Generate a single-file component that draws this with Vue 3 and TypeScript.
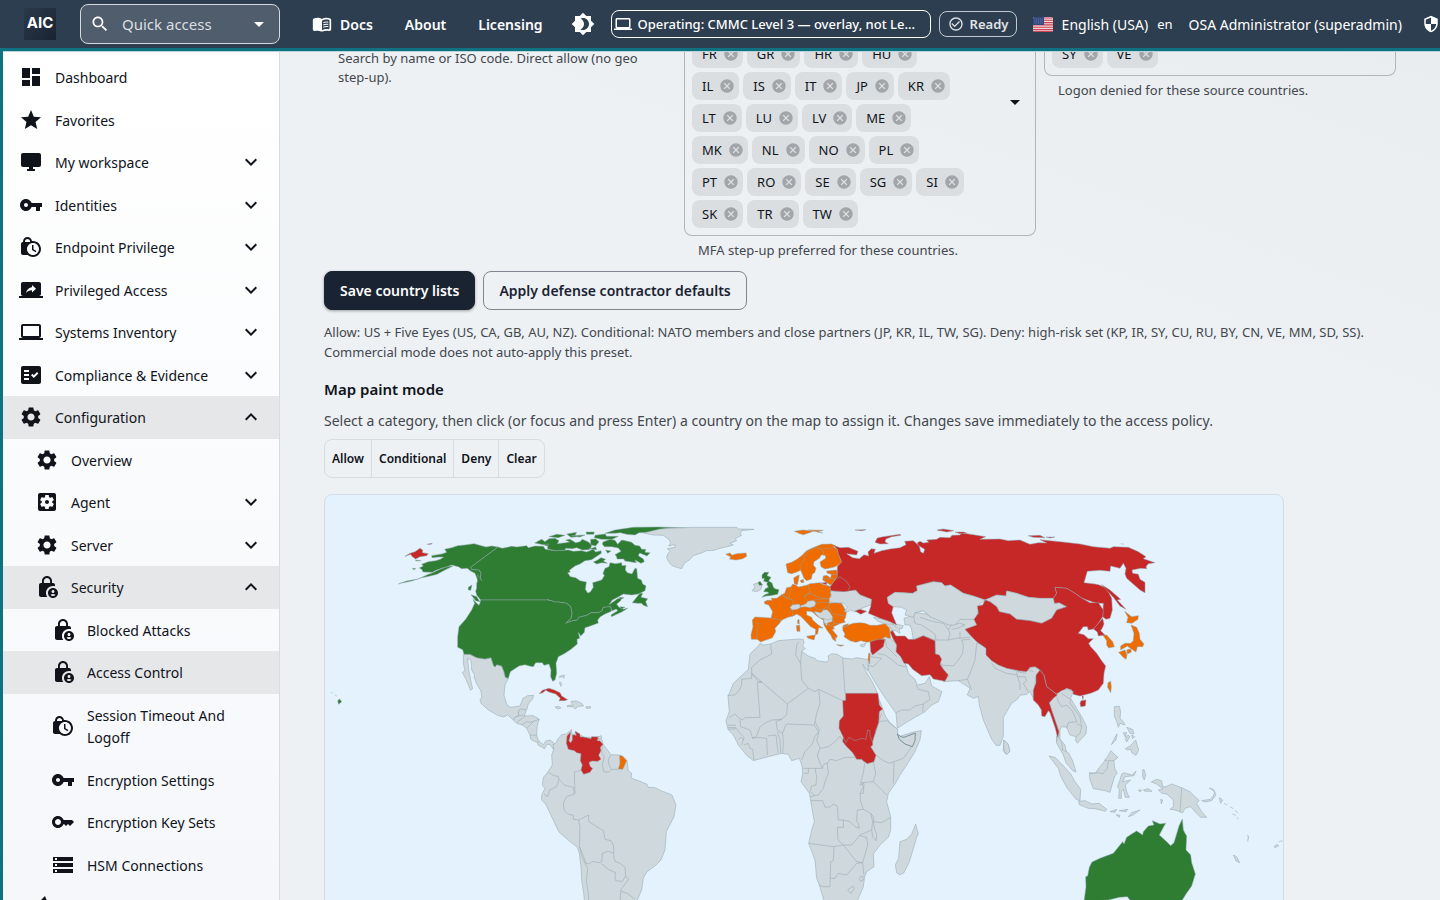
<script setup lang="ts">
import { ref } from 'vue'

interface NavItem {
  label: string
  icon: string
  level: number
  expand?: 'more' | 'less'
  active?: boolean
}

type Status = 'none' | 'allow' | 'cond' | 'deny' | 'line' | 'claim'

interface Region {
  transform: string
  shapes: [Status, string][]
}

const icons: Record<string, string> = {
  dashboard: 'M3 13h8V3H3v10zm0 8h8v-6H3v6zm10 0h8V11h-8v10zm0-18v6h8V3h-8z',
  star: 'M12 17.27 18.18 21l-1.64-7.03L22 9.24l-7.19-.61L12 2 9.19 8.63 2 9.24l5.46 4.73L5.82 21z',
  monitor: 'M20 3H4c-1.1 0-2 .9-2 2v10c0 1.1.9 2 2 2h6v2H8v2h8v-2h-2v-2h6c1.1 0 2-.9 2-2V5c0-1.1-.9-2-2-2z',
  vpnKey: 'M12.65 10C11.83 7.67 9.61 6 7 6c-3.31 0-6 2.69-6 6s2.69 6 6 6c2.61 0 4.83-1.67 5.65-4H17v4h4v-4h2v-4H12.65zM7 14c-1.1 0-2-.9-2-2s.9-2 2-2 2 .9 2 2-.9 2-2 2z',
  lockClock: 'M14.5 14.2l2.9 1.7-.8 1.3L13 15v-5h1.5v4.2zM22 14c0 4.41-3.59 8-8 8-2.02 0-3.86-.76-5.27-2H4c-1.15 0-2-.85-2-2V9c0-1.12.89-1.96 2-2v-.5C4 4.01 6.01 2 8.5 2c2.34 0 4.24 1.79 4.46 4.08.34-.05.69-.08 1.04-.08 4.41 0 8 3.59 8 8zM6 7h5v-.74C10.88 4.99 9.8 4 8.5 4 7.12 4 6 5.12 6 6.5V7zm14 7c0-3.31-2.69-6-6-6s-6 2.69-6 6 2.69 6 6 6 6-2.69 6-6z',
  screenShare: 'M20 18c1.1 0 1.99-.9 1.99-2L22 6c0-1.11-.9-2-2-2H4c-1.11 0-2 .89-2 2v10c0 1.1.89 2 2 2H0v2h24v-2h-4zm-7-3.53v-2.19c-2.78 0-4.61.85-6 2.72.56-2.67 2.11-5.33 6-5.87V7l4 3.73-4 3.74z',
  laptop: 'M20 18c1.1 0 1.99-.9 1.99-2L22 6c0-1.1-.9-2-2-2H4c-1.1 0-2 .9-2 2v10c0 1.1.9 2 2 2H0v2h24v-2h-4zM4 6h16v10H4V6z',
  factCheck: 'M20 3H4c-1.1 0-2 .9-2 2v14c0 1.1.9 2 2 2h16c1.1 0 2-.9 2-2V5c0-1.1-.9-2-2-2zM10 17H5v-2h5v2zm0-4H5v-2h5v2zm0-4H5V7h5v2zm4.82 6L12 12.16l1.41-1.41 1.41 1.42L17.99 9l1.42 1.42L14.82 15z',
  settings: 'M19.14 12.94c.04-.3.06-.61.06-.94 0-.32-.02-.64-.07-.94l2.03-1.58c.18-.14.23-.41.12-.61l-1.92-3.32c-.12-.22-.37-.29-.59-.22l-2.39.96c-.5-.38-1.03-.7-1.62-.94l-.36-2.54c-.04-.24-.24-.41-.48-.41h-3.84c-.24 0-.43.17-.47.41l-.36 2.54c-.59.24-1.13.57-1.62.94l-2.39-.96c-.22-.08-.47 0-.59.22L2.74 8.87c-.12.21-.08.47.12.61l2.03 1.58c-.05.3-.09.63-.09.94s.02.64.07.94l-2.03 1.58c-.18.14-.23.41-.12.61l1.92 3.32c.12.22.37.29.59.22l2.39-.96c.5.38 1.03.7 1.62.94l.36 2.54c.05.24.24.41.48.41h3.84c.24 0 .44-.17.47-.41l.36-2.54c.59-.24 1.13-.56 1.62-.94l2.39.96c.22.08.47 0 .59-.22l1.92-3.32c.12-.22.07-.47-.12-.61l-2.01-1.58zM12 15.6c-1.98 0-3.6-1.62-3.6-3.6s1.62-3.6 3.6-3.6 3.6 1.62 3.6 3.6-1.62 3.6-3.6 3.6z',
  settingsApp: 'M12 10c-1.1 0-2 .9-2 2s.9 2 2 2 2-.9 2-2-.9-2-2-2zm7-7H5c-1.11 0-2 .9-2 2v14c0 1.1.89 2 2 2h14c1.11 0 2-.9 2-2V5c0-1.1-.89-2-2-2zm-1.75 9c0 .23-.02.46-.05.68l1.48 1.16c.13.11.17.3.08.45l-1.4 2.42c-.09.15-.27.21-.43.15l-1.74-.7c-.36.28-.76.51-1.18.69l-.26 1.85c-.03.17-.18.3-.35.3h-2.8c-.17 0-.32-.13-.35-.29l-.26-1.85c-.43-.18-.82-.41-1.18-.69l-1.74.7c-.16.06-.34 0-.43-.15l-1.4-2.42c-.09-.15-.05-.34.08-.45l1.48-1.16c-.03-.23-.05-.46-.05-.69 0-.23.02-.46.05-.68l-1.48-1.16c-.13-.11-.17-.3-.08-.45l1.4-2.42c.09-.15.27-.21.43-.15l1.74.7c.36-.28.76-.51 1.18-.69l.26-1.85c.03-.17.18-.3.35-.3h2.8c.17 0 .32.13.35.29l.26 1.85c.43.18.82.41 1.18.69l1.74-.7c.16-.06.34 0 .43.15l1.4 2.42c.09.15.05.34-.08.45l-1.48 1.16c.03.23.05.46.05.69z',
  lockPerson: 'M18 11c.7 0 1.37.1 2 .29V10c0-1.1-.9-2-2-2h-1V6c0-2.76-2.24-5-5-5S7 3.24 7 6v2H6c-1.1 0-2 .9-2 2v10c0 1.1.9 2 2 2h6.26C11.47 20.87 11 19.49 11 18c0-3.87 3.13-7 7-7zM8.9 6c0-1.71 1.39-3.1 3.1-3.1s3.1 1.39 3.1 3.1v2H8.9V6zM18 13c-2.76 0-5 2.24-5 5s2.24 5 5 5 5-2.24 5-5-2.24-5-5-5zm0 2c.83 0 1.5.67 1.5 1.5S18.83 18 18 18s-1.5-.67-1.5-1.5.67-1.5 1.5-1.5zm0 6c-1.03 0-1.94-.52-2.48-1.32.73-.42 1.57-.68 2.48-.68s1.75.26 2.48.68C19.94 20.48 19.03 21 18 21z',
  key: 'M21 10h-8.35C11.83 7.67 9.61 6 7 6c-3.31 0-6 2.69-6 6s2.69 6 6 6c2.61 0 4.83-1.67 5.65-4H13l2 2 2-2 2 2 4-4.04L21 10zM7 15c-1.65 0-3-1.35-3-3s1.35-3 3-3 3 1.35 3 3-1.35 3-3 3z',
  storage: 'M2 20h20v-4H2v4zm2-3h2v2H4v-2zM2 4v4h20V4H2zm4 3H4V5h2v2zm-4 7h20v-4H2v4zm2-3h2v2H4v-2z',
  more: 'M16.59 8.59 12 13.17 7.41 8.59 6 10l6 6 6-6z',
  less: 'M12 8l-6 6 1.41 1.41L12 10.83l4.59 4.58L18 14z',
  search: 'M15.5 14h-.79l-.28-.27C15.41 12.59 16 11.11 16 9.5 16 5.91 13.09 3 9.5 3S3 5.91 3 9.5 5.91 16 9.5 16c1.61 0 3.09-.59 4.23-1.57l.27.28v.79l5 4.99L20.49 19l-4.99-5zm-6 0C7.01 14 5 11.99 5 9.5S7.01 5 9.5 5 14 7.01 14 9.5 11.99 14 9.5 14z',
  caret: 'M7 10l5 5 5-5z',
  book: 'M17.5 4.5c-1.95 0-4.05.4-5.5 1.5-1.45-1.1-3.55-1.5-5.5-1.5-1.45 0-2.99.22-4.28.79C1.49 5.62 1 6.33 1 7.14v11.28c0 1.3 1.22 2.26 2.48 1.94.98-.25 2.02-.36 3.02-.36 1.56 0 3.22.26 4.56.92.6.3 1.28.3 1.87 0 1.34-.67 3-.92 4.56-.92 1 0 2.04.11 3.02.36 1.26.33 2.48-.63 2.48-1.94V7.14c0-.81-.49-1.52-1.22-1.85-1.28-.57-2.82-.79-4.27-.79zM21 17.23c0 .63-.58 1.09-1.2.98-.75-.14-1.53-.2-2.3-.2-1.7 0-4.15.65-5.5 1.5V8c1.35-.85 3.8-1.5 5.5-1.5.92 0 1.83.09 2.7.28.46.1.8.51.8.98v9.47zM13.6 9.7c1.7-.7 3.9-.95 5.9-.6v1.4c-2-.35-4.2-.1-5.9.6zM13.6 12.4c1.7-.7 3.9-.95 5.9-.6v1.4c-2-.35-4.2-.1-5.9.6zM13.6 15.1c1.7-.7 3.9-.95 5.9-.6v1.4c-2-.35-4.2-.1-5.9.6z',
  brightness: 'M20 8.69V4h-4.69L12 .69 8.69 4H4v4.69L.69 12 4 15.31V20h4.69L12 23.31 15.31 20H20v-4.69L23.31 12 20 8.69zM12 18c-.89 0-1.74-.2-2.5-.55C11.56 16.5 13 14.42 13 12s-1.44-4.5-3.5-5.45C10.26 6.2 11.11 6 12 6c3.31 0 6 2.69 6 6s-2.69 6-6 6z',
  check: 'M16.59 7.58 10 14.17l-3.59-3.58L5 12l5 5 8-8zM12 2C6.48 2 2 6.48 2 12s4.48 10 10 10 10-4.48 10-10S17.52 2 12 2zm0 18c-4.42 0-8-3.58-8-8s3.58-8 8-8 8 3.58 8 8-3.58 8-8 8z',
  shield: 'M12 1 3 5v6c0 5.55 3.84 10.74 9 12 5.16-1.26 9-6.45 9-12V5l-9-4zm0 10.99h7c-.53 4.12-3.28 7.79-7 8.94V12H5V6.3l7-3.11v8.8z',
  cancel: 'M12 2C6.47 2 2 6.47 2 12s4.47 10 10 10 10-4.47 10-10S17.53 2 12 2zm5 13.59L15.59 17 12 13.41 8.41 17 7 15.59 10.59 12 7 8.41 8.41 7 12 10.59 15.59 7 17 8.41 13.41 12 17 15.59z',
  pen: 'M10 1 7 4l-6 8h6l5-6z',
}

const nav: NavItem[] = [
  { label: 'Dashboard', icon: 'dashboard', level: 0 },
  { label: 'Favorites', icon: 'star', level: 0 },
  { label: 'My workspace', icon: 'monitor', level: 0, expand: 'more' },
  { label: 'Identities', icon: 'vpnKey', level: 0, expand: 'more' },
  { label: 'Endpoint Privilege', icon: 'lockClock', level: 0, expand: 'more' },
  { label: 'Privileged Access', icon: 'screenShare', level: 0, expand: 'more' },
  { label: 'Systems Inventory', icon: 'laptop', level: 0, expand: 'more' },
  { label: 'Compliance & Evidence', icon: 'factCheck', level: 0, expand: 'more' },
  { label: 'Configuration', icon: 'settings', level: 0, expand: 'less', active: true },
  { label: 'Overview', icon: 'settings', level: 1 },
  { label: 'Agent', icon: 'settingsApp', level: 1, expand: 'more' },
  { label: 'Server', icon: 'settings', level: 1, expand: 'more' },
  { label: 'Security', icon: 'lockPerson', level: 1, expand: 'less', active: true },
  { label: 'Blocked Attacks', icon: 'lockPerson', level: 2 },
  { label: 'Access Control', icon: 'lockPerson', level: 2, active: true },
  { label: 'Session Timeout And Logoff', icon: 'lockClock', level: 2 },
  { label: 'Encryption Settings', icon: 'vpnKey', level: 2 },
  { label: 'Encryption Key Sets', icon: 'key', level: 2 },
  { label: 'HSM Connections', icon: 'storage', level: 2 },
]

const conditionalRows = [
  ['FR', 'GR', 'HR', 'HU'],
  ['IL', 'IS', 'IT', 'JP', 'KR'],
  ['LT', 'LU', 'LV', 'ME'],
  ['MK', 'NL', 'NO', 'PL'],
  ['PT', 'RO', 'SE', 'SG', 'SI'],
  ['SK', 'TR', 'TW'],
]
const deniedRows = [['SY', 'VE']]

const modes = ['Allow', 'Conditional', 'Deny', 'Clear']
const mode = ref('')

const regions: Region[] = [
  {
    // Americas
    transform: 'translate(325 510) scale(.33333)',
    shapes: [
      ['none', 'M415 433L435 433 455 443 480 447 498 443 508 470 515 464 530 468 537 485 541 502 550 505 540 525 537 555 545 583 556 592 585 588 594 565 608 557 626 556 622 568 610 582 605 600 595 598 580 605 582 618 572 620 565 630 548 615 535 621 518 616 490 600 468 580 465 570 470 562 468 543 455 522 447 500 449 495 440 480 438 450 428 445 430 470 434 495 439 520 443 536 437 541 430 525 423 508 412 487 420 483 415 460Z'],
      ['none', 'M565 630L572 620 582 618 580 605 585 597 600 598 603 604 598 618 625 617 643 628 637 645 635 675 640 692 655 704 662 693 675 690 688 700 685 718 675 704 668 703 662 710 658 717 652 712 640 706 637 697 625 693 617 687 615 675 605 655 592 645 575 640Z'],
      ['line', 'M575 638L588 628 600 618M590 645L605 635 615 637 643 628M605 655L625 635M615 675L635 676M637 697L642 692M583 618L595 615'],
      ['none', 'M740 658L724 672 710 674 700 685 692 700 684 704 686 718 680 735 682 765 668 787 655 802 652 826 660 835 650 855 650 870 663 884 680 920 702 966 733 993 757 1012 763 1030 768 1070 770 1110 776 1150 780 1190 928 1190 950 1140 955 1105 965 1086 990 1068 1008 1050 1020 1020 1024 965 1047 920 1053 885 1041 855 1008 842 990 833 970 832 965 822 940 812 918 804 920 790 910 782 906 752 895 740 882 735 858 734 835 704 831 690 820 680 800 682 780 682 765 675 752 664 748 676 740 670Z'],
      ['line', 'M767 781L748 786 750 850M670 787L685 796 700 800 702 808 695 830 674 840 668 860 657 852M702 808L718 825 745 832 748 852 725 860 715 880 718 902 728 912 745 916 745 928 762 930M762 930L790 915 792 935 812 948 835 962 840 988 858 992 865 1005 867 1030M760 930L765 950 763 1010 772 1030 783 1060 792 1062 803 1054 822 1058 830 1055 832 1030 848 1024 864 1028 870 1054 885 1060 900 1072 902 1098 892 1114 872 1112 870 1098 872 1088 850 1078 828 1060M765 1012L770 1040 788 1075 784 1115 790 1150 792 1190M902 1098L911 1108 888 1138 884 1190M888 1143L910 1152 930 1168M832 705L830 726 838 740 832 765 836 785 850 787 860 778 880 778M857 736L850 750 852 765 860 778'],
      ['deny', 'M737 665L726 678 724 700 730 718 748 722 755 728 768 731 766 752 772 765 768 780 776 793 795 787 803 775 796 770 792 757 802 753 818 754 828 748 821 736 828 722 826 712 834 703 824 692 816 692 822 681 800 680 798 686 780 682 765 680 765 672 750 664 754 676 742 674 742 690 737 698 732 692 735 680Z'],
      ['cond', 'M884 737L892 738 905 752 893 778 880 777 885 762Z'],
      ['deny', 'M643 551L652 541 672 535 688 540 705 548 710 558 728 569 718 572 702 572 706 565 692 552 672 546 662 541 653 548Z'],
      ['none', 'M738 574L755 573 770 580 776 588 760 589 750 597 744 590 726 590 728 586 745 585 740 580ZM690 591L700 589 708 594 698 597ZM783 590L797 590 796 595 784 595ZM704 499L718 495 717 505 712 500 703 502ZM705 515L710 520 708 529 704 521ZM818 681L829 677 830 685 820 687Z'],
      ['allow', 'M519 111L500 108 483 111 447 101 420 105 398 107 380 113 359 118 365 127 350 132 320 137 321 143 340 141 356 141 346 148 332 152 310 155 290 163 295 168 283 174 290 178 294 186 322 187 333 181 352 174 372 169 384 168 360 180 336 193 312 199 290 203 260 213 230 219 220 222 245 213 280 207 310 193 320 190 345 178 380 165 400 170 410 176 427 175 437 183 450 190 456 205 462 222 470 212 466 205 468 190 463 180 440 178 437 172Z'],
      ['allow', 'M519 111L532 115 560 109 575 111 605 107 610 113 630 108 655 109 661 118 690 122 730 120 745 124 770 122 785 126 805 118 812 126 828 122 829 130 800 149 780 152 765 162 750 168 733 181 736 186 728 188 736 200 752 203 765 212 784 216 781 238 788 249 796 246 805 232 803 218 830 210 838 197 834 190 840 175 852 170 855 158 872 161 890 158 891 167 903 166 901 180 907 188 921 192 930 175 935 176 938 205 949 210 953 222 963 228 960 242 940 252 920 255 895 252 878 262 862 270 852 284 878 266 890 263 887 272 875 282 882 292 895 298 908 295 890 306 870 315 860 320 858 315 878 302 874 297 860 303 857 290 835 292 831 303 820 308 798 308 785 316 762 322 757 330 740 333 722 340 738 325 741 310 737 290 725 280 700 276 688 276 678 271 671 272 669 267 665 270 467 270 455 255 452 243 455 235 455 220 458 212 456 200 458 194 470 212 466 205 468 190 463 180 440 178 437 172Z'],
      ['allow', 'M467 270L665 270 669 267 671 272 678 271 688 276 700 276 725 280 737 290 741 310 738 325 722 340 740 333 757 330 762 322 785 316 798 308 820 308 831 303 835 292 857 290 859 304 840 312 826 320 818 330 820 339 790 350 780 353 778 367 767 378 760 367 764 385 756 388 757 402 738 418 720 430 700 440 693 460 695 490 690 510 683 514 677 500 678 480 672 462 657 466 652 458 632 458 625 470 613 468 600 464 582 468 556 485 550 505 541 502 537 485 530 468 515 464 511 470 506 468 498 443 480 447 455 443 435 433 417 433 413 419 398 412 398 380 402 350 422 328 440 300 449 280 444 268 455 280 462 286 465 278Z'],
      ['allow', 'M438 254L455 260 465 275 452 272ZM430 232L441 225 437 241 430 240ZM922 278L935 262 945 250 953 250 948 262 968 266 962 275 968 290 955 286 950 280 938 280ZM882 262L897 263 890 267ZM884 290L900 292 890 297Z'],
      ['allow', 'M629 99L650 88 660 95 672 86 690 85 702 92 697 101 722 98 734 96 722 90 735 88 752 98 765 95 772 88 790 96 800 105 797 115 790 119 772 120 755 113 742 116 722 115 720 121 690 122 668 117 668 107 648 103ZM672 80L695 73 720 76 700 83ZM725 72L755 67 750 76 760 80 738 82ZM783 66L808 66 806 73 785 73ZM797 88L812 87 822 95 812 108 797 104ZM810 76L840 72 845 79 880 79 862 88 830 88 808 83ZM840 70L870 60 890 57 925 52 1000 51 1085 54 1035 55 1010 58 978 67 942 68 930 75 905 73 886 68 870 70ZM655 103L672 102 665 108ZM740 77L780 75 765 81Z'],
      ['allow', 'M834 96L855 88 870 91 878 103 890 90 908 94 920 97 930 106 944 108 950 118 962 118 960 127 975 128 966 138 944 129 940 137 955 147 958 155 948 160 930 150 934 158 920 156 900 153 896 147 876 147 875 140 870 134 888 124 880 114 860 110 838 110 832 102ZM805 156L818 150 828 143 842 148 835 153 847 160 830 158 815 162ZM792 117L812 111 815 119ZM842 120L858 123 848 130Z'],
      ['allow', 'M38 572L44 567 50 575 41 583ZM30 555L36 559M18 547L23 549M262 175L273 176 265 179M270 150L288 152 275 153'],
      ['deny', 'M240 139L255 130 270 125 285 115 293 120 292 128 310 131 305 137 285 140 272 147 262 140 257 133ZM306 103L322 100 318 103Z'],
    ],
  },
  {
    // Europe and the North Atlantic
    transform: 'translate(640 510) scale(.33333)',
    shapes: [
      ['none', 'M10 69L60 57 90 55 160 52 290 52 296 57 342 58 305 62 300 72 305 76 285 86 290 92 270 100 280 105 262 110 240 115 222 121 200 122 182 130 160 137 148 150 133 160 125 176 110 172 95 166 86 155 80 142 84 130 90 124 82 116 105 112 105 104 86 108 92 98 86 88 70 76 40 75Z'],
      ['cond', 'M257 133L270 129 276 136 290 131 318 129 320 139 308 146 288 150 268 147 273 141ZM463 64L490 60 520 64 506 69 490 74 480 71ZM505 60L550 61 532 66 548 69Z'],
      ['none', 'M336 242L345 231 340 223 355 218 366 226 362 239 350 245Z'],
      ['allow', 'M354 218L360 214 368 225 358 226ZM366 195L373 187 386 187 381 197 393 202 386 213 396 219 400 231 405 236 417 239 413 253 390 257 378 258 366 262 374 254 386 250 384 246 371 245 376 236 385 232 380 222 383 217 371 214 373 204 366 206Z'],
      ['cond', 'M438 162L455 157 472 147 485 137 500 122 522 112 545 103 575 102 586 107 582 112 592 118 595 132 605 155 595 166 580 172 555 177 543 170 540 156 557 145 557 137 545 134 538 145 522 155 520 165 528 175 524 188 517 192 514 207 500 212 492 205 486 190 482 180 473 185 455 191 443 188ZM461 204L470 198 478 195 476 207 472 224 463 222ZM480 212L490 208 492 217 484 218Z'],
      ['line', 'M482 182L480 165 492 150 494 138 510 118 530 113 545 118 552 115 570 117 585 108M540 114L550 125 551 136'],
      ['cond', 'M560 183L590 180 592 193 594 205 586 222 570 224 548 210 550 198 560 196 572 204 574 193 562 190Z'],
      ['line', 'M573 193L592 194M550 207L575 205 590 210'],
      ['cond', 'M373 275L382 271 396 271 394 265 410 265 425 254 434 250 440 233 453 231 457 223 465 224 476 231 500 226 510 221 540 218 545 222 570 229 572 243 575 250 568 268 568 280 585 278 605 280 614 297 620 300 617 322 612 330 616 337 602 340 580 350 583 357 576 358 592 378 588 386 585 380 588 394 578 388 572 375 562 362 552 345 550 330 530 318 518 306 508 304 500 303 500 315 515 322 518 330 535 345 549 354 536 353 533 372 526 374 527 358 512 350 496 333 482 319 470 312 460 318 444 322 425 330 420 338 405 355 407 365 397 383 385 388 375 391 362 396 352 388 334 388 333 375 339 350 337 330 345 321 393 324 398 305 386 285 374 281Z'],
      ['none', 'M450 292L458 284 478 282 482 292 472 298 463 299 455 300ZM480 288L498 281 503 274 520 271 528 278 524 289 510 293 494 290 484 292Z'],
      ['none', 'M523 304L543 308 550 300 562 299 570 308 578 320 576 335 564 338 560 348 552 337 551 326 540 324 527 312Z'],
      ['line', 'M424 254L450 268 460 270 458 283 450 292 458 303 458 318M424 254L435 262 447 266 450 248 455 235M505 224L510 247 493 258 503 274M493 258L510 250 542 264 568 266M520 271L535 268 568 266M528 280L545 276 568 278M524 289L532 298 550 298 565 290 570 278M510 293L512 302M549 300L555 292M565 290L580 312 615 318M578 322L582 340 602 340M564 350L582 342M393 324L428 332M345 338L356 340 352 360 350 388M550 325L566 330 576 324M556 340L572 345'],
      ['cond', 'M500 379L526 375 522 390 503 384ZM469 347L479 345 480 364 471 364ZM473 330L477 328 478 341 473 341ZM590 404L612 406 602 409Z'],
      ['none', 'M570 246L600 243 612 245 632 240 647 240 660 254 694 266 694 284 660 297 645 306 632 300 625 305 612 305 622 292 612 280 600 278 570 277 568 266 575 258Z'],
      ['line', 'M602 280L613 290 614 305'],
      ['none', 'M700 322L745 330 763 345 772 343 790 347 786 357 778 354 780 370 768 362 748 363 740 345 712 333Z'],
      ['line', 'M735 342L760 343 770 355M748 348L760 362'],
      ['cond', 'M608 350L625 345 640 340 660 338 675 340 690 346 712 346 735 341 748 354 752 385 735 387 710 390 692 395 680 397 662 392 648 397 630 392 612 380 615 372 609 362ZM610 346L625 341 622 349 610 352Z'],
      ['none', 'M660 405L678 400 672 410 664 410Z'],
      ['deny', 'M705 97L712 84 730 80 780 73 783 76 755 80 738 87 735 95 745 101 720 102ZM645 60L678 59 665 62ZM892 61L904 59 900 63Z'],
    ],
  },
  {
    // Africa
    transform: 'translate(700 630) scale(.33333)',
    shapes: [
      ['none', 'M180 40L190 45 212 42 235 32 270 29 295 27 310 28 312 38 308 48 316 56 305 64 325 78 345 85 352 92 378 96 387 92 384 78 395 71 412 73 430 84 455 87 470 83 500 88 507 92 508 110 503 122 488 103 500 128 515 152 528 178 536 205 548 235 556 258 568 276 585 292 594 300 592 315 602 318 640 306 664 302 660 330 645 365 620 405 600 435 585 462 565 490 560 515 572 560 572 600 565 622 540 645 520 672 522 710 500 725 494 740 490 770 472 812 372 812 358 765 350 745 345 690 326 640 335 600 343 575 332 512 328 490 303 455 308 430 306 408 298 385 275 392 265 373 245 370 205 380 160 392 140 376 115 345 100 315 84 298 78 272 88 245 84 200 100 160 145 118 150 72 175 48Z'],
      ['line', 'M212 42L215 72 180 90 155 112 155 145 125 148 125 165 118 180 105 195 82 196M155 130L262 222 325 175 305 150 302 100 287 75 290 45 297 35M302 100L305 65M155 130L175 155 186 156 172 157 180 262 135 263 128 270 118 265 105 252 88 262M262 222L260 255 245 268 215 270 195 280 180 290 170 318 157 325M325 175L345 185 356 178 360 220 350 250 343 285 260 282 255 290 248 310 232 300 228 275 245 268M356 178L428 212M428 85L435 190M343 285L355 305 345 320 335 345 315 365 305 390M345 275L358 300 355 315 350 330 360 355 385 350 405 335 420 318 430 335M360 355L352 375 360 400 367 415 372 402 382 400 390 388 410 392 435 382 460 382 483 388M310 415L345 415 367 415M310 430L325 430 325 415M345 415L350 440 348 465 335 468 330 485 345 497M382 400L385 430 375 455 370 475 355 495 330 500M332 512L368 512 375 532 392 530 400 522 412 528 415 570 430 570 430 592 412 592 414 630 430 645 400 650 326 640M430 570L450 575 465 590 478 595 475 580 470 575 472 540 490 538 512 550 518 575 515 600 480 615 455 645 430 645M490 538L482 515 480 490 490 470 482 458 520 455 560 495M520 455L527 430 520 395M494 400L490 430 482 458M478 465L492 460 490 490 480 490M520 575L545 578 572 562M512 550L520 560 522 590 530 615 528 632 518 620 515 600M478 617L500 622 503 645 488 698 470 695 450 670 430 645M402 650L400 692 392 695 390 770 370 770 358 765M392 745L405 745 415 730 440 735 470 700 488 698 490 720 492 735M478 742L488 738 490 750 482 754 478 745M120 270L122 290 150 300 158 325M84 286L108 285M84 293L108 292M84 298L110 296 120 310 132 322 125 345M115 328L122 322 132 330M132 345L145 340 150 355 158 358 162 390M158 325L172 322 200 325 202 375M202 318L228 315 234 368M232 305L240 330 242 370M248 310L250 340 248 370M545 250L535 275 560 272 590 295M528 375L550 392 568 400 582 395 610 385 637 348M582 397L580 460M535 278L525 315'],
      ['none', 'M647 582L655 612 650 622 645 640 628 695 612 728 600 735 590 728 586 705 596 685 597 668 600 635 620 628 635 612Z'],
      ['line', 'M443 780L458 768 463 776 452 790Z'],
      ['deny', 'M437 190L534 190 538 225 548 237 538 245 536 278 528 300 518 335 518 346 512 350 528 376 522 395 502 401 490 393 485 388 470 388 458 368 440 350 428 335 430 322 417 295 418 272 430 258 428 212 437 211Z'],
      ['line', 'M430 322L438 338 447 322 465 332 485 325 498 328 503 300 510 302 510 320 518 335'],
      ['claim', 'M592 312L602 320 612 322 646 309 645 332 637 350 615 342 598 328Z'],
    ],
  },
  {
    // Asia
    transform: 'translate(880 510) scale(.33333)',
    shapes: [
      ['none', 'M-30 440L-20 412 15 380 35 388 50 402 52 425 65 440 75 460 80 470 85 490 105 508 112 525 135 520 148 500 155 528 186 545 175 575 155 585 135 605 105 622 75 640 52 655 48 610 20 570 -10 525 -35 482 -36 465Z'],
      ['line', 'M-28 440L5 445 -20 470 -36 466M-8 430L15 435 35 448 55 466 78 470M15 385L20 410 50 440M48 608L65 600 90 600 105 588 130 582 128 605M130 582L150 568 145 545 115 538 108 525'],
      ['none', 'M90 345L75 345 72 325 88 320 100 308 200 318 292 328 330 400 345 455 415 485 450 475 468 470 485 485 468 500 465 525 460 565 450 545 440 553 420 556 412 568 395 580 370 622 370 678 360 706 348 706 335 688 310 630 298 585 295 560 280 565 262 555 270 535 235 512 190 515 205 500 180 460 165 430 165 390 130 378 100 388 95 360Z'],
      ['line', 'M100 335L110 342 125 345 165 372 168 390M105 340L100 310 130 302 150 320 185 318 205 330 215 345 205 358 190 340 160 335 120 322M165 390L205 390 230 385 270 382M205 358L210 372 205 390M215 345L240 340 255 345 232 355 215 358M240 365L240 385M168 430L185 465 220 468 235 450 248 430 250 405 245 390 270 388M235 512L262 508 270 490 285 450 290 400 320 405M262 508L275 540M335 460L345 475 380 490 410 495M410 487L412 500 420 520 420 540M412 485L438 490M412 500L435 500 440 512 430 520 445 545M445 480L460 485'],
      ['none', 'M372 690L385 705 389 725 378 733 370 722Z'],
      ['deny', 'M-140 106L-120 113 -95 112 -66 124 -70 135 -100 131 -82 143 -62 146 -48 134 -34 138 -36 126 -26 116 -14 118 -18 130 5 122 30 117 60 113 78 104 74 94 100 92 118 108 122 125 130 130 134 118 114 106 112 98 120 94 130 99 146 97 140 90 170 88 180 82 210 83 216 76 240 75 245 69 280 74 317 80 300 88 360 87 385 92 420 90 450 103 475 98 500 99 480 89 540 95 600 102 640 110 690 115 700 110 745 112 775 125 798 140 790 146 825 158 805 161 798 170 800 176 782 175 756 180 758 190 775 193 780 208 795 217 795 248 780 240 740 205 735 192 738 175 730 160 720 175 692 168 690 184 660 181 622 184 612 218 645 222 658 225 680 235 695 265 697 300 690 325 678 328 668 320 670 280 650 280 620 270 605 264 585 250 560 235 525 232 530 250 520 265 480 265 445 262 410 250 380 243 378 258 350 255 315 270 280 258 250 250 212 225 195 228 185 218 160 215 110 228 112 242 98 250 45 247 22 262 25 280 40 290 35 308 50 345 30 335 0 325 -35 310 -28 290 -25 268 -60 254 -73 240 -108 245 -148 242 -150 230 -135 210 -128 200 -128 170 -115 155 -125 132 -128 118Z'],
      ['line', 'M-150 230L-135 210 -120 200 -100 215 -90 230 -95 240'],
      ['deny', 'M-75 303L-60 298 -40 304 -58 313ZM-178 219L-160 217 -160 224ZM172 60L190 57 222 62 200 66ZM225 66L250 66 262 70 240 71ZM445 77L480 76 495 83 460 82ZM498 81L525 81 510 84ZM722 101L732 103M665 224L690 240 722 268 712 270 738 298 720 288 700 262Z'],
      ['none', 'M22 262L45 247 98 250 112 242 110 228 160 215 185 218 195 228 212 225 250 250 280 258 315 270 295 287 308 300 292 308 290 328 240 328 225 345 205 345 185 335 150 320 130 302 105 308 100 322 75 315 80 300 65 292 40 290 25 280Z'],
      ['none', 'M315 270L350 255 378 258 380 243 410 250 445 262 480 265 520 265 524 280 538 278 560 290 530 300 515 325 485 340 450 332 410 328 390 312 358 305 350 290 330 275Z'],
      ['deny', 'M315 270L330 275 350 290 358 305 390 312 410 328 450 332 485 340 515 325 530 300 560 290 538 278 524 280 520 265 530 250 525 232 560 235 585 250 605 264 630 278 655 278 670 300 668 320 655 340 640 357 625 360 622 350 610 350 595 370 612 374 625 386 640 386 626 400 632 410 650 430 665 452 677 468 672 490 670 520 655 540 632 550 600 558 580 553 575 540 560 535 530 552 520 545 500 530 492 495 480 480 465 470 450 472 440 485 415 482 380 475 355 465 335 452 318 435 318 415 290 395 275 380 255 358 290 345 282 328 295 310 292 288 308 285Z'],
      ['deny', 'M640 357L655 340 668 325 672 342 668 352 662 362 675 375 655 378 652 366ZM603 572L618 570 616 588 602 590 600 580ZM606 558L610 558 609 570'],
      ['cond', 'M668 375L680 375 698 395 703 410 686 414 680 405 680 392ZM734 304L755 320 775 317 774 328 756 340 740 338 744 322ZM753 345L770 352 778 370 780 388 792 402 788 410 772 410 768 426 755 418 742 408 722 420 722 408 735 400 752 400 760 392 762 370ZM716 427L735 420 741 435 738 448 728 440ZM740 420L752 417 754 426 742 432ZM684 518L692 514 694 532 692 548 683 532Z'],
      ['deny', 'M30 365L38 362 48 378 75 378 85 388 105 388 130 377 165 392 166 432 178 435 185 448 180 462 190 478 205 495 195 514 160 507 150 494 125 497 98 478 85 462 72 460 62 440 48 425 50 405 38 385Z'],
      ['deny', 'M-30 395L-5 388 15 388 10 410 -22 435 -28 425Z'],
      ['cond', 'M-34 430L-30 430 -31 462 -36 448Z'],
      ['none', 'M530 553L545 542 562 537 580 545 572 565 582 582 605 620 620 650 618 672 592 700 586 690 588 680 570 675 560 652 545 650 540 660 540 688 555 705 560 730 545 722 530 695 530 680 536 680 535 660 523 625 510 600 508 580 520 560Z'],
      ['line', 'M530 560L535 575 545 590 560 585 575 600 585 620 590 635 565 638 560 655M545 550L558 560 572 568 570 580 600 620 605 650 590 640M605 650L600 670 588 680'],
      ['deny', 'M480 480L492 495 495 510 500 530 520 545 532 555 520 565 508 578 515 600 525 630 537 665 533 685 526 655 510 608 505 602 495 620 485 618 484 600 475 585 460 570 460 540 468 518 468 495Z'],
    ],
  },
  {
    // Oceania and South-East Asia
    transform: 'translate(980 640) scale(.33333)',
    shapes: [
      ['none', 'M230 288L245 305 248 330 265 338 278 362 288 396 278 392 258 368 250 345 235 318 230 310ZM207 348L225 352 245 372 272 402 285 425 302 448 300 482 288 478 260 442 242 408 235 385ZM296 484L315 482 335 492 358 490 380 508 376 514 345 506 325 505 298 494ZM390 515L410 508 405 517ZM418 512L443 508 438 515ZM408 524L420 526 418 532ZM445 530L455 518 480 510 458 526ZM475 450L485 450 480 456ZM490 450L505 446 516 454 495 454Z'],
      ['none', 'M328 398L345 400 360 380 375 362 393 332 402 342 414 352 402 362 404 385 412 400 404 408 390 457 375 452 340 446 330 420Z'],
      ['line', 'M330 400L355 398 368 402 382 385 385 362 402 362M372 360L382 362'],
      ['none', 'M425 402L432 398 455 405 468 394 462 407 435 410 428 425 452 420 436 435 440 455 448 472 436 472 430 448 424 455 424 475 416 475 418 448 412 440 420 420ZM488 390L492 388 497 405 493 420 488 410Z'],
      ['none', 'M403 200L418 199 422 215 420 235 430 245 435 255 420 250 415 262 410 245 403 228ZM394 314L405 292 411 282 408 300ZM440 262L458 268 462 282 450 280 444 268ZM430 278L440 278 436 292ZM444 285L450 290 440 306 436 298ZM455 285L464 290 458 296ZM436 326L450 318 460 308 467 300 476 330 468 346 455 338 452 328 440 330Z'],
      ['none', 'M71 300L84 312 90 334 80 343 72 332Z'],
      ['none', 'M514 426L530 418 545 422 548 440 558 440 575 432 605 443 630 455 640 465 658 482 650 490 665 515 680 532 662 532 645 515 632 500 615 505 608 518 585 510 570 508 580 500 580 480 560 462 545 460 535 450 548 446 530 432ZM542 478L548 480 544 492ZM665 482L690 478 700 468 705 455 688 444 700 448 708 465 695 482 675 486ZM718 473L728 480 722 490ZM732 490L742 495M750 500L760 506M765 510L774 520M757 522L768 526M770 532L776 537M802 585L806 590 803 605M882 620L890 613 896 617 886 623ZM896 606L908 602M760 645L770 650 779 668 768 663Z'],
      ['line', 'M605 443L600 517'],
      ['allow', 'M312 785L318 740 317 710 323 708 328 682 336 666 360 655 400 640 428 605 432 612 440 592 455 582 470 573 488 585 490 575 505 558 522 555 517 542 540 552 557 550 550 562 538 585 560 605 572 617 582 608 592 575 597 558 607 537 610 570 615 580 620 588 618 630 632 645 635 668 646 702 635 738 618 762 604 785 458 790 442 770 418 772 385 780Z'],
    ],
  },
]
</script>

<template>
  <div class="app">
    <header class="topbar">
      <div class="logo">AIC</div>
      <button class="quick" type="button">
        <svg class="i20" viewBox="0 0 24 24"><path :d="icons.search" /></svg>
        <span>Quick access</span>
        <svg class="i24" viewBox="0 0 24 24"><path :d="icons.caret" /></svg>
      </button>
      <nav class="links">
        <a href="#docs"><svg class="i20" viewBox="0 0 24 24"><path fill-rule="evenodd" :d="icons.book" /></svg>Docs</a>
        <a href="#about">About</a>
        <a href="#licensing">Licensing</a>
      </nav>
      <button class="plain" type="button" aria-label="Theme">
        <svg class="i24" viewBox="0 0 24 24"><path :d="icons.brightness" /></svg>
      </button>
      <button class="operating" type="button">
        <svg class="i18" viewBox="0 0 24 24"><path :d="icons.laptop" /></svg>
        <span>Operating: CMMC Level 3 — overlay, not Le...</span>
      </button>
      <button class="ready" type="button">
        <svg class="i16" viewBox="0 0 24 24"><path :d="icons.check" /></svg>
        <span>Ready</span>
      </button>
      <button class="lang" type="button">
        <svg class="flag" viewBox="0 0 20 15">
          <rect width="20" height="15" rx="2" fill="#f1d5d8" />
          <path d="M1 1h18M0 3.3h20M0 5.6h20M0 7.9h20M0 10.2h20M0 12.5h20M1 14.4h18" stroke="#cc4455" stroke-width="1.1" />
          <path d="M2 0h9v8H0V2a2 2 0 0 1 2-2z" fill="#34487f" />
          <path d="M1.5 2h9M1.5 4h9M1.5 6h9" stroke="#8c9cc4" stroke-width=".7" stroke-dasharray=".8 1" />
        </svg>
        <span>English (USA)</span>
        <small>en</small>
      </button>
      <span class="user">OSA Administrator (superadmin)</span>
      <svg class="i18 shield" viewBox="0 0 24 24"><path :d="icons.shield" /></svg>
    </header>

    <div class="body">
      <aside class="sidebar">
        <button
          v-for="item in nav"
          :key="item.label"
          type="button"
          class="item"
          :class="['level' + item.level, { active: item.active }]"
        >
          <svg class="i24" viewBox="0 0 24 24"><path :d="icons[item.icon]" /></svg>
          <span>{{ item.label }}</span>
          <svg v-if="item.expand" class="i24" viewBox="0 0 24 24"><path :d="icons[item.expand]" /></svg>
        </button>
        <div class="item level1"><svg class="i24" viewBox="0 0 24 24"><path :d="icons.pen" /></svg></div>
      </aside>

      <main class="main">
        <section class="lists">
          <div class="col">
            <p class="helper first">Search by name or ISO code. Direct allow (no geo step-up).</p>
          </div>
          <div class="col">
            <div class="field">
              <div class="chips">
                <div v-for="(row, i) in conditionalRows" :key="i" class="chiprow">
                  <span v-for="code in row" :key="code" class="chip">
                    {{ code }}<button type="button" :aria-label="'Remove ' + code"><svg class="i16" viewBox="0 0 24 24"><path :d="icons.cancel" /></svg></button>
                  </span>
                </div>
              </div>
              <button class="open" type="button" aria-label="Open"><svg class="i24" viewBox="0 0 24 24"><path :d="icons.caret" /></svg></button>
            </div>
            <p class="helper">MFA step-up preferred for these countries.</p>
          </div>
          <div class="col">
            <div class="field">
              <div class="chips">
                <div v-for="(row, i) in deniedRows" :key="i" class="chiprow">
                  <span v-for="code in row" :key="code" class="chip">
                    {{ code }}<button type="button" :aria-label="'Remove ' + code"><svg class="i16" viewBox="0 0 24 24"><path :d="icons.cancel" /></svg></button>
                  </span>
                </div>
              </div>
            </div>
            <p class="helper">Logon denied for these source countries.</p>
          </div>
        </section>

        <div class="actions">
          <button class="btn primary" type="button">Save country lists</button>
          <button class="btn outline" type="button">Apply defense contractor defaults</button>
        </div>
        <p class="note">
          Allow: US + Five Eyes (US, CA, GB, AU, NZ). Conditional: NATO members and close partners (JP, KR, IL, TW, SG).
          Deny: high-risk set (KP, IR, SY, CU, RU, BY, CN, VE, MM, SD, SS). Commercial mode does not auto-apply this preset.
        </p>
        <h2>Map paint mode</h2>
        <p class="desc">
          Select a category, then click (or focus and press Enter) a country on the map to assign it. Changes save
          immediately to the access policy.
        </p>
        <div class="toggle">
          <button v-for="m in modes" :key="m" type="button" :aria-pressed="mode === m" @click="mode = m">{{ m }}</button>
        </div>
        <div class="map">
          <svg viewBox="325 495 958 480" role="img" aria-label="World map">
            <g v-for="region in regions" :key="region.transform" :transform="region.transform">
              <path v-for="(shape, i) in region.shapes" :key="i" :class="shape[0]" :d="shape[1]" />
            </g>
          </svg>
        </div>
      </main>
    </div>
  </div>
</template>

<style>
html,
body {
  margin: 0;
  overflow: hidden;
}
</style>

<style scoped>
* {
  box-sizing: border-box;
}
.app {
  height: 100vh;
  display: flex;
  flex-direction: column;
  font-family: 'Segoe UI', 'Noto Sans', 'Open Sans', sans-serif;
  font-size: 14px;
  color: #10131a;
  overflow: hidden;
}
button {
  font: inherit;
  color: inherit;
  background: none;
  border: 0;
  padding: 0;
  text-align: left;
  cursor: pointer;
}
a {
  color: inherit;
  text-decoration: none;
}
svg {
  display: block;
  flex: none;
}
svg path {
  fill: currentColor;
}
.i16 { width: 16px; height: 16px; }
.i18 { width: 18px; height: 18px; }
.i20 { width: 20px; height: 20px; }
.i24 { width: 24px; height: 24px; }

.topbar {
  flex: none;
  height: 48px;
  display: flex;
  align-items: center;
  padding-left: 24px;
  background: #2d3e50;
  color: #fff;
  white-space: nowrap;
  overflow: hidden;
}
.topbar > * {
  flex: none;
}
.logo {
  width: 32px;
  height: 32px;
  margin-right: 24px;
  background: linear-gradient(135deg, #2a3a4b, #1a2332);
  font: 700 15px/30px Inter, sans-serif;
  text-align: center;
}
.quick {
  width: 200px;
  height: 40px;
  display: flex;
  align-items: center;
  gap: 12px;
  padding: 0 8px 0 9px;
  border: 1px solid #d5d8dc;
  border-radius: 8px;
  background: #4f5d6c;
  font-size: 15px;
  color: #dcdfe2;
}
.quick span {
  flex: 1;
}
.quick svg {
  color: #fff;
}
.links {
  display: flex;
  gap: 32px;
  margin-left: 32px;
  font-weight: 600;
}
.links a {
  display: flex;
  align-items: center;
  gap: 8px;
}
.plain {
  margin: 0 16px 0 28px;
}
.operating {
  width: 320px;
  height: 28px;
  display: flex;
  align-items: center;
  gap: 6px;
  padding: 0 2px;
  border: 1px solid #fff;
  border-radius: 8px;
  font-size: 13px;
  font-weight: 500;
}
.ready {
  width: 78px;
  height: 26px;
  display: flex;
  align-items: center;
  gap: 6px;
  margin-left: 8px;
  padding: 0 8px;
  border: 1px solid #c3c8cd;
  border-radius: 8px;
  font-size: 13px;
  font-weight: 600;
  color: #e0e3e6;
}
.lang {
  display: flex;
  align-items: center;
  gap: 9px;
  margin-left: 16px;
}
.lang small {
  font-size: 13px;
}
.flag {
  width: 20px;
  height: 15px;
}
.flag path[stroke] {
  fill: none;
}
.flag path[fill] {
  fill: #34487f;
}
.user {
  margin-left: 16px;
}
.shield {
  margin-left: 20px;
}

.body {
  flex: 1;
  min-height: 0;
  display: flex;
  border-top: 3px solid #0f7280;
  border-left: 3px solid #0f7280;
  background: linear-gradient(200deg, #e9edf0, #edf1f4 30%);
}
.sidebar {
  flex: none;
  width: 277px;
  padding-top: 4px;
  border-top: 1px solid #b9d3d9;
  border-right: 1px solid #d7dce3;
  background: linear-gradient(#fff, #f5f7fa);
  font-size: 15px;
  line-height: 1.5em;
  overflow: hidden;
}
.item {
  display: flex;
  align-items: center;
  gap: 12px;
  width: 100%;
  padding: 11px 16px 9px;
  line-height: inherit;
}
.item span {
  flex: 1;
  font-size: 14px;
}
.item svg {
  margin-top: -2px;
}
.item.level1 { padding-left: 32px; }
.item.level2 { padding-left: 48px; }
.item.active { background: #e6e7e9; }

.main {
  flex: 1;
  min-width: 0;
  padding: 0 44px;
  border-top: 1px solid #b9d3d9;
  overflow: hidden;
}
.lists {
  display: grid;
  grid-template-columns: repeat(3, minmax(0, 1fr));
  gap: 8px;
  margin-top: -12px;
}
.field {
  display: flex;
  align-items: center;
  padding: 0 8px 7px 7px;
  border: 1px solid #b1b6bb;
  border-top: 0;
  border-radius: 0 0 8px 8px;
}
.chips {
  flex: 1;
  display: flex;
  flex-direction: column;
  gap: 4px;
}
.chiprow {
  display: flex;
  gap: 4px;
}
.chip {
  display: flex;
  align-items: center;
  gap: 6px;
  height: 28px;
  padding: 0 4px 0 10px;
  border-radius: 8px;
  background: #dadee1;
  font-size: 13px;
}
.chip button {
  color: #a2a5a9;
}
.open {
  align-self: flex-start;
  margin-top: 50px;
}
.helper {
  margin: 4px 14px 0;
  font-size: 13px;
  line-height: 20px;
  color: #43474e;
}
.helper.first {
  margin-top: 9px;
  line-height: 19px;
}
.actions {
  display: flex;
  gap: 8px;
  margin-top: 11px;
}
.btn {
  height: 39px;
  padding: 0 15px;
  border: 1px solid #7f868f;
  border-radius: 8px;
  font-size: 14px;
  font-weight: 600;
  color: #1a2332;
}
.btn.primary {
  border-color: #1a2332;
  background: #1a2332;
  color: #fff;
  box-shadow: 0 1px 3px rgba(0, 0, 0, 0.35);
}
.note {
  margin: 12px 0 0;
  font-size: 13px;
  line-height: 20px;
  color: #43474e;
}
h2 {
  margin: 15px 0 0;
  font-size: 15px;
  line-height: 24px;
  font-weight: 600;
}
.desc {
  margin: 10px 0 0;
  font-size: 14px;
  line-height: 20px;
  color: #43474e;
}
.toggle {
  display: flex;
  width: fit-content;
  margin-top: 8px;
  border: 1px solid #d7dce3;
  border-radius: 8px;
}
.toggle button {
  height: 37px;
  padding: 0 7px;
  font-size: 12px;
  font-weight: 600;
}
.toggle button + button {
  border-left: 1px solid #d7dce3;
}
.map {
  max-width: 960px;
  margin-top: 16px;
  border: 1px solid #d7dce3;
  border-radius: 8px;
  background: #e3f2fd;
  overflow: hidden;
}
.map svg {
  width: 100%;
  height: auto;
}
.map path {
  stroke: #90a4ae;
  stroke-width: 1.5;
  stroke-linejoin: round;
}
.map .none { fill: #cfd8dc; }
.map .allow { fill: #2e7d32; }
.map .cond { fill: #ef6c00; }
.map .deny { fill: #c62828; }
.map .line { fill: none; }
.map .claim { fill: #cfd8dc; stroke: #78909c; stroke-width: 3; }
</style>
